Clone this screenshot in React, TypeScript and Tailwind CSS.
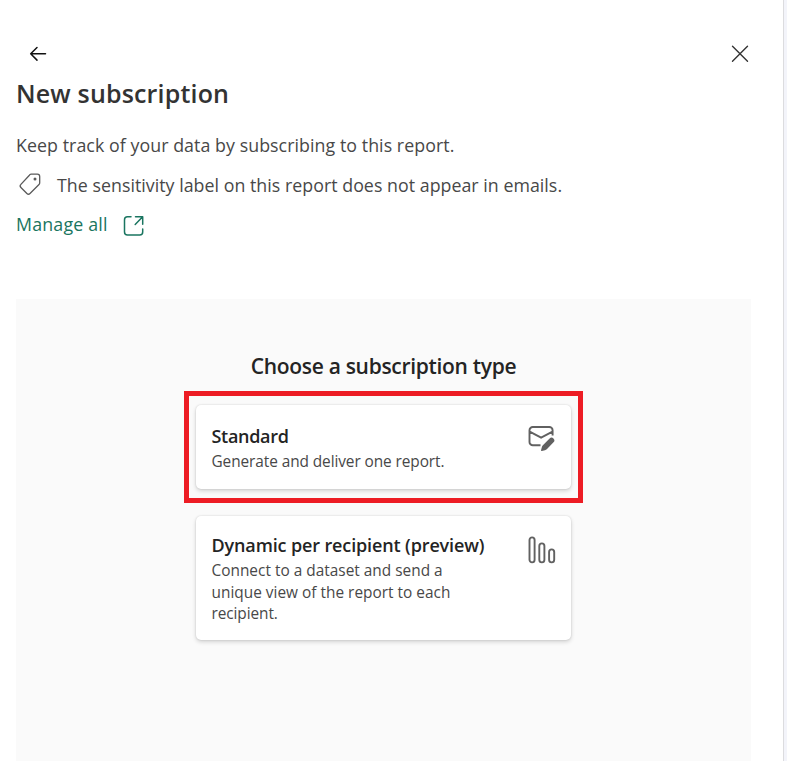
import React from "react";

function BackIcon() {
  return (
    <svg width="18" height="16" viewBox="0 0 18 16" fill="none" stroke="#111" strokeWidth="1.5" strokeLinecap="round" strokeLinejoin="round">
      <path d="M8 1.500 1.700 7.800 8 14.100M1.900 7.800h14.600" />
    </svg>
  );
}

function CloseIcon() {
  return (
    <svg width="18" height="18" viewBox="0 0 18 18" fill="none" stroke="#333" strokeWidth="1.4" strokeLinecap="round">
      <path d="M1.500 1.200l15 15M16.500 1.200l-15 15" />
    </svg>
  );
}

function TagIcon() {
  return (
    <svg width="24" height="24" viewBox="0 0 24 24" fill="none" stroke="#5a5a5a" strokeWidth="1.3" strokeLinejoin="round">
      <path d="M13 1.200h6.400a2.300 2.300 0 0 1 2.300 2.300v6.300a2.300 2.300 0 0 1-.7 1.700l-9 9a2.200 2.200 0 0 1-3.100 0l-6-6a2.200 2.200 0 0 1 0-3.100l8.500-9.200A2.300 2.300 0 0 1 13 1.200Z" />
      <circle cx="17" cy="5.900" r="1.500" fill="#5a5a5a" stroke="none" />
    </svg>
  );
}

function OpenIcon() {
  return (
    <svg width="22" height="22" viewBox="0 0 22 22" fill="none" stroke="#1a7560" strokeWidth="1.500" strokeLinecap="round" strokeLinejoin="round">
      <path d="M8 1.800H4.500a3 3 0 0 0-3 3v12.300a3 3 0 0 0 3 3h12.200a3 3 0 0 0 3-3V14M12.500 1.800h7.200v7.400M19.400 2.100l-7.200 7.400" />
    </svg>
  );
}

function MailEditIcon() {
  return (
    <svg width="28" height="28" viewBox="0 0 28 28" fill="none" stroke="#616161" strokeWidth="1.900" strokeLinejoin="round">
      <path d="M12.500 20.200H4.800a3.300 3.300 0 0 1-3.300-3.300V5.300A3.300 3.300 0 0 1 4.800 2h16.500a3.300 3.300 0 0 1 3.300 3.300v5.200M1.700 6.700l11.400 6L24.500 6.700" />
      <path d="M21.600 13.500a2.700 2.700 0 0 1 3.900 3.800l-6.700 6.900a4 4 0 0 1-1.800 1l-3.100.8a.7.700 0 0 1-.8-.9l.8-3a4 4 0 0 1 1-1.800Z" fill="#616161" stroke="none" />
    </svg>
  );
}

function BarsIcon() {
  return (
    <svg width="28" height="28" viewBox="0 0 28 28" fill="none" stroke="#616161" strokeWidth="1.900">
      <rect x="1.500" y="1.400" width="5.100" height="25" rx="2.550" />
      <rect x="11.300" y="7.400" width="5.100" height="19" rx="2.550" />
      <rect x="21.100" y="13.400" width="5.100" height="13" rx="2.550" />
    </svg>
  );
}

type CardProps = { title: React.ReactNode; children: React.ReactNode; icon: React.ReactNode; className: string };

function TypeCard({ title, children, icon, className }: CardProps) {
  return (
    <button
      className={
        "mr-px flex w-[375px] items-start justify-between rounded-[5px] bg-white pr-[15px] pl-4 text-left shadow-[0_2px_4px_rgba(0,0,0,0.16),0_0_2px_rgba(0,0,0,0.14)] " +
        className
      }
    >
      <span className="block whitespace-nowrap">
        <span className="block h-[27px] text-[18px] leading-6 font-semibold text-[#242424]">{title}</span>
        {children}
      </span>
      {icon}
    </button>
  );
}

export default function App() {
  return (
    <div className="flex h-[761px] w-[787px] overflow-hidden bg-[#f3f4fa] font-['Open_Sans','Noto_Sans',sans-serif]">
      <main className="flex w-[784px] flex-col border-r border-[#dcdcdf] bg-white pl-4">
        <header className="flex h-[77px] items-start justify-between pt-[45px] pr-[34px] pl-[13px]">
          <button aria-label="Back" className="pt-px"><BackIcon /></button>
          <button aria-label="Close"><CloseIcon /></button>
        </header>
        <h1 className="h-14 text-[25px] leading-8 font-semibold whitespace-nowrap text-[#333]">
          <span className="tracking-[0.170px]">New subscription</span>
        </h1>
        <p className="h-10 text-[17.800px] leading-6 whitespace-nowrap text-[#484848]">
          <span className="tracking-[0.060px]">Keep track of your data by subscribing to this report.</span>
        </p>
        <div className="flex h-[39px] items-start gap-[15px] pl-[2px] text-[17.800px] leading-6 whitespace-nowrap text-[#484848]">
          <TagIcon />
          <span className="tracking-[0.030px]">The sensitivity label on this report does not appear in emails.</span>
        </div>
        <a className="flex h-[87px] items-start text-[17.800px] leading-6 whitespace-nowrap text-[#1a7560]">
          <span className="w-[107px] tracking-[0.180px]">Manage all</span>
          <span className="pt-[3px]"><OpenIcon /></span>
        </a>
        <section className="flex w-[735px] grow flex-col items-center bg-[#fafafa] pt-[53px]">
          <h2 className="h-[39px] text-[21px] leading-7 font-semibold whitespace-nowrap text-[#242424]">
            <span className="tracking-[-0.310px]">Choose a subscription type</span>
          </h2>
          <div className="mb-[13px] flex h-28 w-[399px] justify-center border-5 border-[#ed1c24] pt-[9px]">
            <TypeCard className="h-[84px] pt-[19px]" title={<span className="tracking-[-0.300px]">Standard</span>} icon={<span className="block pt-px"><MailEditIcon /></span>}>
              <span className="block text-[15.400px] leading-[22px] text-[#484848]">
                <span className="tracking-[-0.080px]">Generate and deliver one report.</span>
              </span>
            </TypeCard>
          </div>
          <TypeCard className="h-[124px] pt-[17px]" title={<span className="tracking-[-0.130px]">Dynamic per recipient (preview)</span>} icon={<span className="block pt-[3px]"><BarsIcon /></span>}>
            <span className="block text-[15.400px] leading-[21.700px] text-[#484848]">
              <span className="tracking-[0.010px]">Connect to a dataset and send a</span><br />
              <span className="tracking-[0.010px]">unique view of the report to each</span><br />
              <span className="tracking-[-0.080px]">recipient.</span>
            </span>
          </TypeCard>
        </section>
      </main>
    </div>
  );
}
